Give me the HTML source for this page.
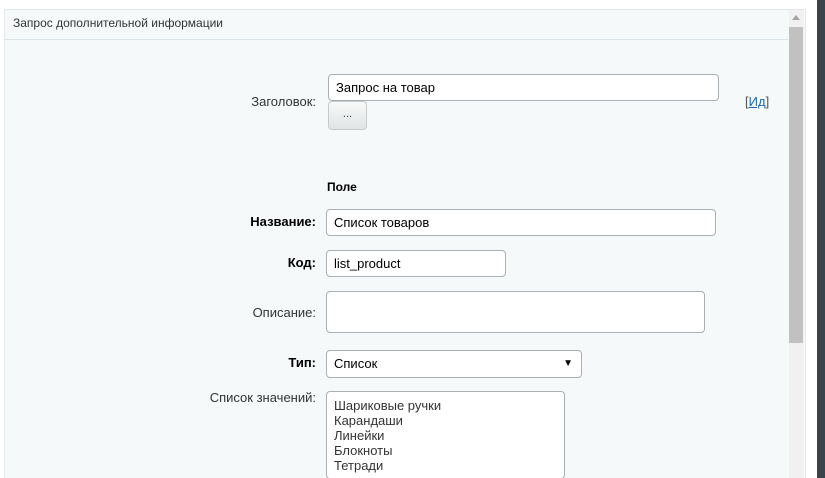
<!DOCTYPE html>
<html><head><style>
html,body{margin:0;width:825px;height:478px;overflow:hidden}
body{background:#fff;font-family:"Liberation Sans",Arial,sans-serif;font-size:12px;color:#000;position:relative}
.a{position:absolute}
.panel{left:4px;top:9px;width:800px;height:475px;background:#f5f9fa;border:1px solid #e3e8ea}
.hdr{left:5px;top:10px;width:783px;height:29px;border-bottom:1px solid #d8e4e8;background:#f5f9fa}
.lbl{position:absolute;text-align:right;width:300px;font-size:13px;color:#333}
.b{font-weight:bold;color:#000}
.in{position:absolute;background:#fff;border:1px solid #a9b0b3;border-radius:4px;box-sizing:border-box;font-size:13px;color:#000;padding-left:7px}
</style></head><body>
<div class="a panel"></div>
<div class="a hdr"></div>
<div class="a" style="left:13px;top:16px;font-size:12px;color:#333">Запрос дополнительной информации</div>
<div class="a" style="left:789px;top:10px;width:15px;height:470px;background:#f1f1f1"></div>
<div class="a" style="left:792px;top:15px;width:0;height:0;border-left:4px solid transparent;border-right:4px solid transparent;border-bottom:5px solid #a3a3a3"></div>
<div class="a" style="left:789px;top:27px;width:14px;height:316px;background:#c1c1c1"></div>
<div class="a" style="left:817px;top:0;width:8px;height:478px;background:#3c444b"></div>

<div class="lbl" style="left:16px;top:94px">Заголовок:</div>
<div class="in" style="left:328px;top:74px;width:391px;height:27px;line-height:25px">Запрос на товар</div>
<div class="a" style="left:328px;top:101px;width:39px;height:29px;border:1px solid #c5cbcd;border-radius:4px;box-sizing:border-box;background:linear-gradient(#f8f9f9,#dfe4e5);text-align:center;line-height:24px;font-size:11px;color:#444">...</div>
<div class="a" style="left:745px;top:94px;font-size:13px;color:#555">[<span style="color:#2067b0;text-decoration:underline">Ид</span>]</div>

<div class="a b" style="left:327px;top:180px;font-size:12px">Поле</div>
<div class="lbl b" style="left:16px;top:214px">Название:</div>
<div class="in" style="left:326px;top:209px;width:390px;height:27px;line-height:25px">Список товаров</div>
<div class="lbl b" style="left:16px;top:255px">Код:</div>
<div class="in" style="left:326px;top:250px;width:180px;height:27px;line-height:25px">list_product</div>
<div class="lbl" style="left:16px;top:305px">Описание:</div>
<div class="in" style="left:326px;top:291px;width:379px;height:42px"></div>
<div class="lbl b" style="left:16px;top:355px">Тип:</div>
<div class="in" style="left:326px;top:350px;width:256px;height:28px;line-height:26px">Список<span style="position:absolute;right:8px;font-size:10px">▼</span></div>
<div class="lbl" style="left:16px;top:390px">Список значений:</div>
<div class="in" style="left:326px;top:391px;width:239px;height:88px;padding-top:6px;line-height:15px;color:#333">Шариковые ручки<br>Карандаши<br>Линейки<br>Блокноты<br>Тетради</div>
</body></html>
